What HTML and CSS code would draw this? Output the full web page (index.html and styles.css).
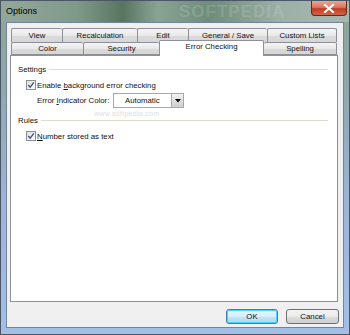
FILE: index.html
```html
<!DOCTYPE html>
<html>
<head>
<meta charset="utf-8">
<link rel="stylesheet" href="styles.css">
</head>
<body>
<div class="window">
  <div class="titlebar">
    <span class="title">Options</span>
    <span class="title-mark">SOFTPEDIA</span>
    <div class="close">
      <svg width="12" height="9" viewBox="0 0 12 9"><path d="M2 1 L10 8 M10 1 L2 8" stroke="#fff" stroke-width="2.2" stroke-linecap="square"/></svg>
    </div>
  </div>
  <div class="client">
    <div class="tabs">
      <div class="tab-row back">
        <div class="tab">View</div>
        <div class="tab">Recalculation</div>
        <div class="tab">Edit</div>
        <div class="tab">General / Save</div>
        <div class="tab">Custom Lists</div>
      </div>
      <div class="tab-row front">
        <div class="tab">Color</div>
        <div class="tab">Security</div>
        <div class="tab active">Error Checking</div>
        <div class="tab">Spelling</div>
      </div>
    </div>
    <div class="panel">
      <div class="group-head"><span>Settings</span><span class="rule"></span></div>
      <div class="check-row first">
        <svg class="cb" width="10" height="10" viewBox="0 0 10 10">
          <defs><linearGradient id="g1" x1="0" y1="0" x2="1" y2="1"><stop offset="0" stop-color="#dcdcdc"/><stop offset="1" stop-color="#ffffff"/></linearGradient></defs>
          <rect x="0.5" y="0.5" width="9" height="9" fill="url(#g1)" stroke="#8e8f8f"/>
          <path d="M2.3 5 L4.2 7.2 L7.8 2.4" fill="none" stroke="#3d5289" stroke-width="1.3"/>
        </svg>
        <span>Enable <u>b</u>ackground error checking</span>
      </div>
      <div class="select-row">
        <span class="label">Error <u>I</u>ndicator Color:</span>
        <div class="select">
          <span class="value">Automatic</span>
          <span class="arrow"><svg width="6" height="4" viewBox="0 0 6 4"><path d="M0 0 H6 L3 3.5 Z" fill="#000"/></svg></span>
        </div>
      </div>
      <div class="group-head second"><span>Rules</span><span class="rule"></span></div>
      <div class="check-row">
        <svg class="cb" width="10" height="10" viewBox="0 0 10 10">
          <defs><linearGradient id="g2" x1="0" y1="0" x2="1" y2="1"><stop offset="0" stop-color="#dcdcdc"/><stop offset="1" stop-color="#ffffff"/></linearGradient></defs>
          <rect x="0.5" y="0.5" width="9" height="9" fill="url(#g2)" stroke="#8e8f8f"/>
          <path d="M2.3 5 L4.2 7.2 L7.8 2.4" fill="none" stroke="#3d5289" stroke-width="1.3"/>
        </svg>
        <span><u>N</u>umber stored as text</span>
      </div>
      <span class="watermark">www.softpedia.com</span>
    </div>
    <div class="buttons">
      <div class="btn default">OK</div>
      <div class="btn">Cancel</div>
    </div>
  </div>
</div>
</body>
</html>
```
FILE: styles.css
```css
* { box-sizing: border-box; }
html, body { margin: 0; padding: 0; }
body {
  font-family: "Liberation Sans", Arial, sans-serif;
  font-size: 7.8px;
  color: #111;
}
.window {
  width: 350px;
  height: 335px;
  display: flex;
  flex-direction: column;
  background: linear-gradient(180deg, #8ea598 0%, #8fa7a9 25%, #9bb5d6 60%, #a3bfe6 100%);
  border: 1px solid #4a5566;
  position: relative;
  overflow: hidden;
}
.titlebar {
  height: 21px;
  display: flex;
  align-items: flex-start;
  justify-content: space-between;
  position: relative;
  background: linear-gradient(90deg, #93a89c 0%, #7f9988 22%, #58755f 35%, #8aa394 45%, #6f8c79 60%, #9cb0a6 80%, #a8b8b0 100%);
}
.title {
  font-size: 9px;
  color: #000;
  padding-left: 5px;
  line-height: 21px;
}
.title-mark {
  position: absolute;
  left: 178px;
  top: 1px;
  font-size: 17px;
  font-weight: bold;
  letter-spacing: 1px;
  color: rgba(255, 255, 255, 0.14);
}
.close {
  width: 36px;
  height: 15px;
  margin-right: 2px;
  border: 1px solid #5e2a22;
  border-top: none;
  border-radius: 0 0 4px 4px;
  background: linear-gradient(180deg, #eaa692 0%, #d9785f 45%, #c03d24 55%, #d2644a 100%);
  display: flex;
  align-items: center;
  justify-content: center;
  position: relative;
  z-index: 1;
}
.client {
  margin: 0 5px 0 5px;
  height: 306px;
  background: #f0f0f0;
  border: 1px solid #7484a0;
  display: flex;
  flex-direction: column;
}
.tabs {
  margin: 5px 0 0 4px;
  width: 326px;
  display: flex;
  flex-direction: column;
}
.tab-row { display: grid; }
.tab-row.back { grid-template-columns: 51px 75px 51px 79px 70px; height: 14px; }
.tab-row.front { grid-template-columns: 72px 76px 105px 73px; height: 13px; }
.tab {
  border: 1px solid #8e9099;
  border-right: none;
  border-radius: 2px 2px 0 0;
  background: linear-gradient(180deg, #f4f4f4 0%, #e9e9e9 50%, #dadada 55%, #d6d6d6 100%);
  text-align: center;
  line-height: 12px;
  color: #111;
}
.tab:last-child { border-right: 1px solid #8e9099; }
.back .tab { border-bottom: none; line-height: 13px; }
.front .tab { line-height: 11px; }
.tab.active {
  background: #fff;
  margin-top: -2px;
  margin-bottom: -1px;
  border-right: 1px solid #8e9099;
  border-bottom: none;
  line-height: 12px;
  position: relative;
  z-index: 1;
}
.front .tab.active + .tab { border-left: none; }
.panel {
  margin-left: 3px;
  width: 328px;
  height: 247px;
  background: #fff;
  border: 1px solid #8e9099;
  position: relative;
  padding-top: 8px;
}
.group-head {
  display: flex;
  align-items: center;
  gap: 3px;
  padding-left: 7px;
  padding-right: 9px;
  height: 10px;
}
.group-head.second { margin-top: 7px; }
.rule { flex: 1; height: 1px; background: #dcdccd; }
.check-row {
  display: flex;
  align-items: center;
  gap: 1px;
  padding-left: 15px;
  height: 10px;
  margin-top: 6px;
}
.cb { display: block; flex: none; }
.select-row {
  display: flex;
  align-items: center;
  padding-left: 26px;
  margin-top: 3px;
  height: 15px;
}
.label { width: 76px; }
.select {
  width: 71px;
  height: 15px;
  border: 1px solid #a6a8ae;
  background: #fff;
  display: flex;
  align-items: center;
  justify-content: space-between;
}
.value { padding-left: 11px; }
.arrow {
  width: 12px;
  height: 13px;
  border-left: 1px solid #a9abb0;
  background: linear-gradient(180deg, #f3f3f3 0%, #dedede 50%, #cfcfcf 100%);
  display: flex;
  align-items: center;
  justify-content: center;
}
.arrow svg { display: block; }
.watermark {
  position: absolute;
  left: 83px;
  top: 54px;
  font-size: 7px;
  color: #dedede;
  letter-spacing: 0.3px;
}
.buttons {
  display: flex;
  justify-content: flex-end;
  gap: 8px;
  padding-right: 4px;
  margin-top: 7px;
}
.btn {
  width: 53px;
  height: 15px;
  border: 1px solid #707070;
  border-radius: 3px;
  background: linear-gradient(180deg, #f3f3f3 0%, #ebebeb 50%, #dddddd 52%, #cfcfcf 100%);
  text-align: center;
  line-height: 13px;
  color: #111;
}
.btn.default {
  width: 52px;
  border-color: #3c7fb1;
  background: linear-gradient(180deg, #e8f6fd 0%, #d6eefb 50%, #c2e5f7 52%, #a9d9f2 100%);
  box-shadow: inset 0 0 0 1px #48d4f9;
}
```
